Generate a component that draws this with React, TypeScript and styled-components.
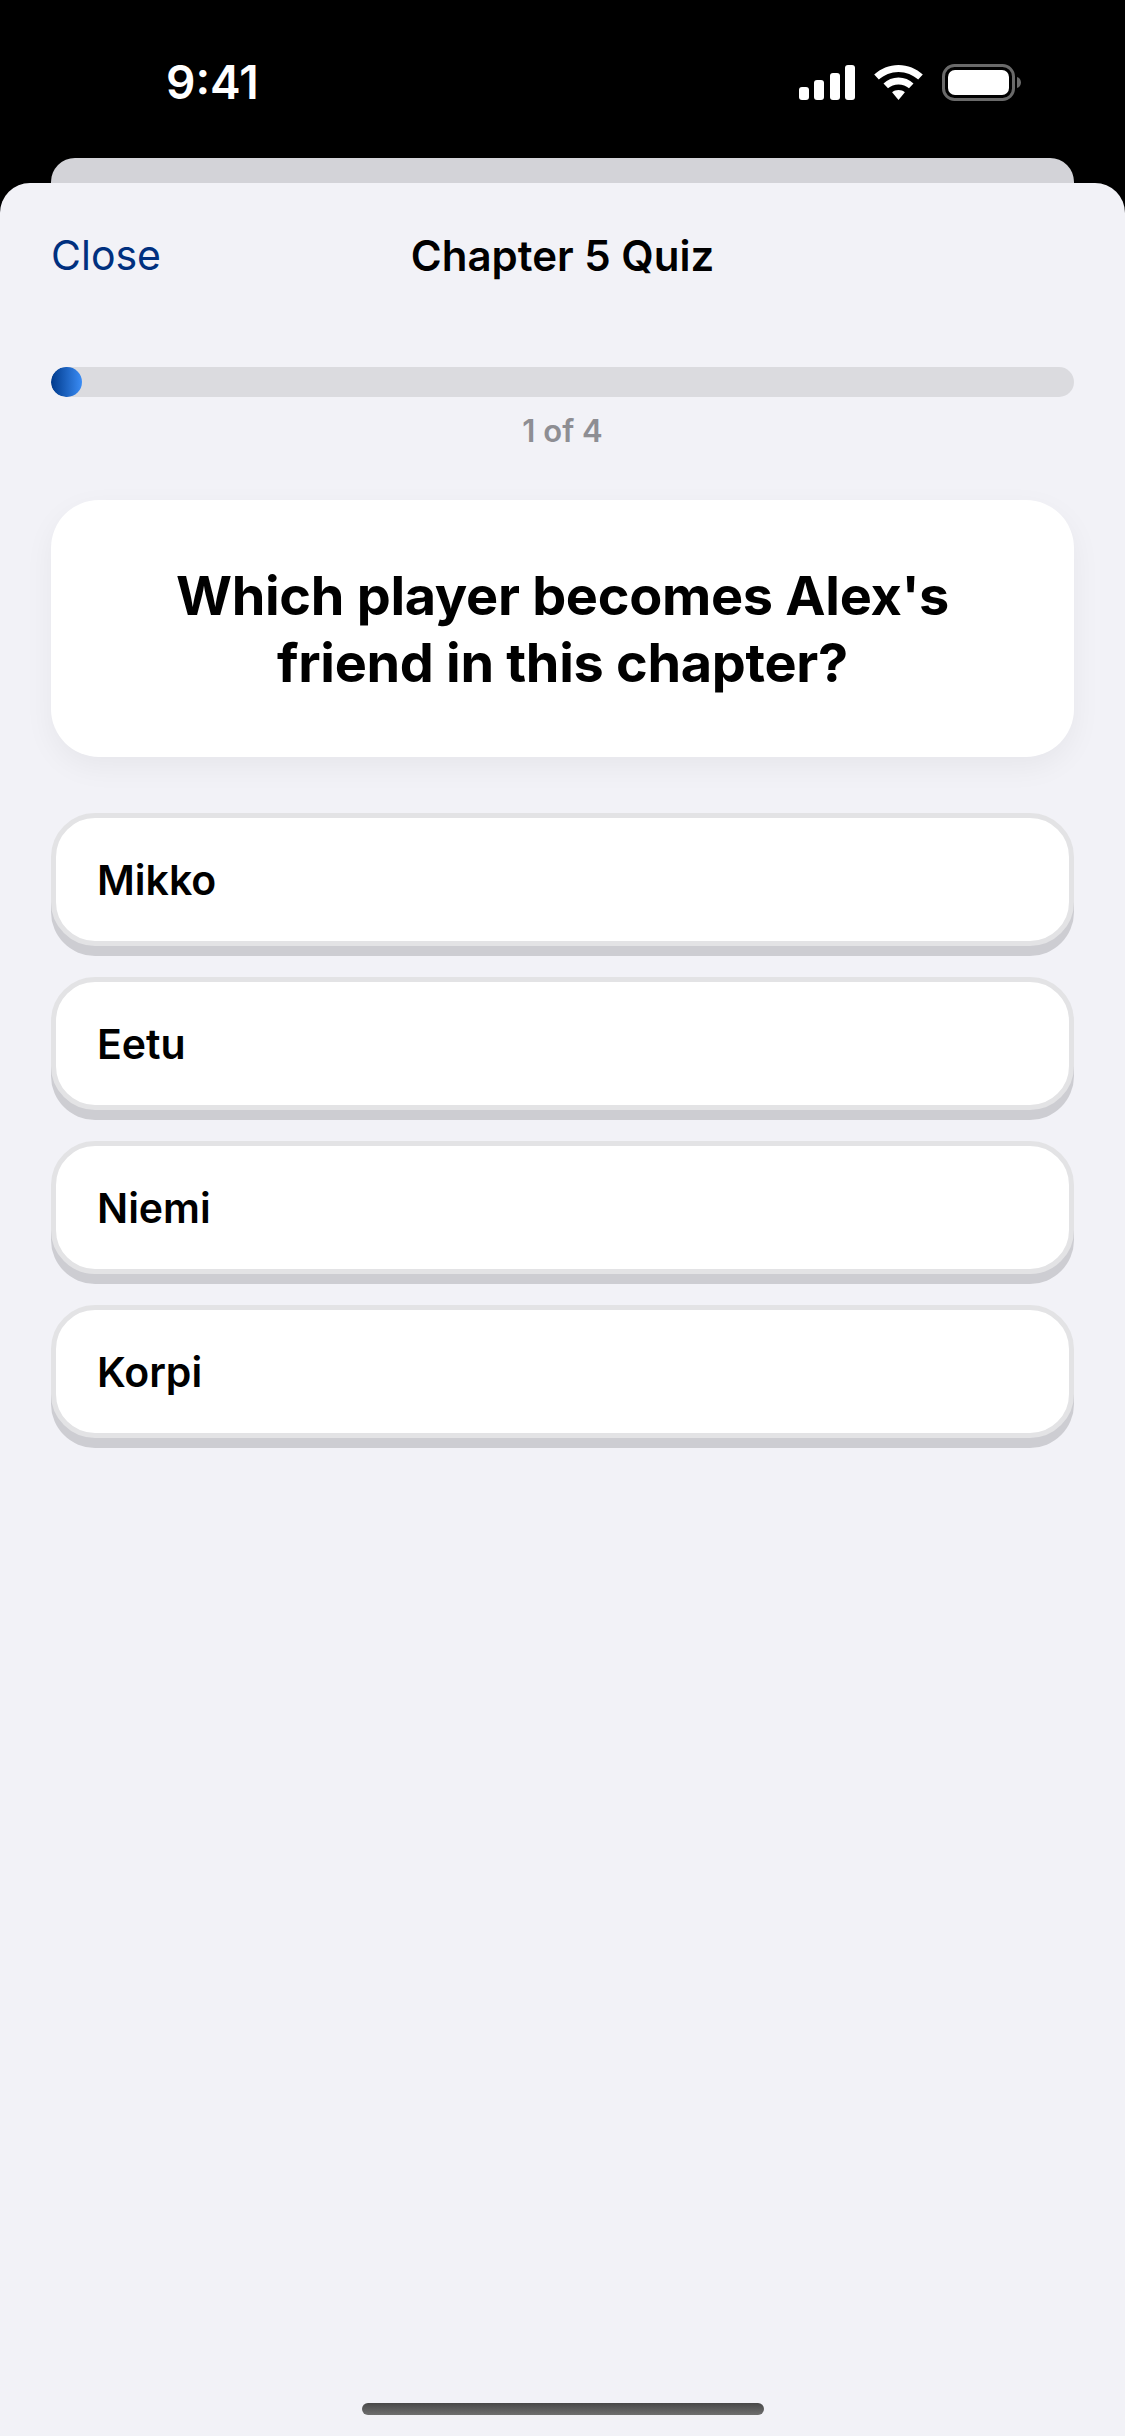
import styled, { createGlobalStyle } from "styled-components";

const GlobalStyle = createGlobalStyle`
	html, body {
		margin: 0;
		padding: 0;
		background: #000;
	}

	* {
		box-sizing: border-box;
	}
`;

const Screen = styled.div`
	display: flex;
	flex-direction: column;
	width: 1125px;
	height: 2436px;
	background: #000;
	font-family: Inter, "Liberation Sans", sans-serif;
	overflow: hidden;
`;

const StatusBar = styled.div`
	display: flex;
	align-items: center;
	justify-content: space-between;
	height: 158px;
	padding: 6px 104px 0 166px;
`;

const Clock = styled.span`
	color: #fff;
	font-size: 46px;
	font-weight: 600;
`;

const StatusIcons = styled.div`
	display: flex;
	align-items: center;
	gap: 19px;
`;

const PeekCard = styled.div`
	flex: none;
	height: 25px;
	margin: 0 51px;
	background: #d3d3d8;
	border-radius: 24px 24px 0 0;
`;

const Sheet = styled.div`
	flex: 1;
	display: flex;
	flex-direction: column;
	padding: 0 51px 21px;
	background: #f2f2f7;
	border-radius: 30px 30px 0 0;
`;

const NavBar = styled.div`
	display: grid;
	grid-template-columns: 1fr auto 1fr;
	align-items: center;
	height: 144px;
`;

const CloseButton = styled.span`
	color: #00307f;
	font-size: 41px;
	font-weight: 400;
`;

const Title = styled.span`
	color: #000;
	font-size: 42px;
	font-weight: 600;
`;

const ProgressTrack = styled.div`
	height: 30px;
	margin-top: 40px;
	background: #dbdbdf;
	border-radius: 15px;
	overflow: hidden;
`;

const ProgressFill = styled.div`
	height: 100%;
	border-radius: 15px;
	background: linear-gradient(90deg, #003a8c, #3a8cf5);
`;

const ProgressLabel = styled.div`
	margin-top: 15px;
	color: #8e8e93;
	font-size: 31px;
	font-weight: 600;
	line-height: 38px;
	text-align: center;
`;

const QuestionCard = styled.div`
	display: flex;
	align-items: center;
	justify-content: center;
	height: 257px;
	margin-top: 50px;
	padding: 0 60px;
	background: #fff;
	border-radius: 48px;
	box-shadow: 0 10px 30px rgba(0, 0, 0, 0.05);
`;

const QuestionText = styled.h1`
	margin: 0;
	color: #000;
	font-size: 54px;
	font-weight: 700;
	line-height: 67px;
	text-align: center;
	letter-spacing: -0.3px;
`;

const Options = styled.div`
	display: flex;
	flex-direction: column;
	gap: 21px;
	margin-top: 56px;
`;

const OptionButton = styled.div`
	display: flex;
	align-items: center;
	height: 133px;
	margin-bottom: 10px;
	padding-left: 41px;
	color: #000;
	background: #fff;
	border: 5px solid #e3e3e5;
	border-radius: 44px;
	box-shadow: 0 10px 0 #cdcdd2;
	font-size: 41px;
	font-weight: 600;
`;

const HomeIndicator = styled.div`
	align-self: center;
	width: 402px;
	height: 12px;
	margin-top: auto;
	background: linear-gradient(180deg, #484848, #6f6f6f);
	border-radius: 6px;
`;

const options = ["Mikko", "Eetu", "Niemi", "Korpi"];

function SignalIcon() {
	return (
		<svg width="56" height="35" viewBox="0 0 56 35" fill="#fff">
			<rect x="0" y="22" width="10" height="13" rx="3" />
			<rect x="15" y="15" width="10" height="20" rx="3" />
			<rect x="31" y="8" width="10" height="27" rx="3" />
			<rect x="46" y="0" width="10" height="35" rx="3" />
		</svg>
	);
}

function WifiIcon() {
	return (
		<svg width="49" height="35" viewBox="0 0 49 35" fill="#fff">
			<path d="M24.5 0C33.8 0 42.3 3.6 48.8 9.6L44.2 14.6C38.9 9.8 32 6.9 24.5 6.9S10.1 9.8 4.8 14.6L0.2 9.6C6.7 3.6 15.2 0 24.5 0Z" />
			<path d="M24.5 12.6C30.3 12.6 35.5 14.8 39.5 18.4L35 23.3C32.2 20.9 28.5 19.4 24.5 19.4S16.8 20.9 14 23.3L9.5 18.4C13.5 14.8 18.7 12.6 24.5 12.6Z" />
			<path d="M24.5 25C27 25 29.2 25.9 30.9 27.3L24.5 35L18.1 27.3C19.8 25.9 22 25 24.5 25Z" />
		</svg>
	);
}

function BatteryIcon() {
	return (
		<svg width="79" height="37" viewBox="0 0 79 37" fill="none">
			<rect x="1.5" y="1.5" width="70" height="34" rx="11" stroke="#6a6a6a" strokeWidth="3" />
			<rect x="6" y="6" width="61" height="25" rx="7" fill="#fff" />
			<path d="M75 13C77.5 13.8 79 16 79 18.5S77.5 23.2 75 24Z" fill="#6a6a6a" />
		</svg>
	);
}

export default function App() {
	return (
		<Screen>
			<GlobalStyle />
			<StatusBar>
				<Clock>9:41</Clock>
				<StatusIcons>
					<SignalIcon />
					<WifiIcon />
					<BatteryIcon />
				</StatusIcons>
			</StatusBar>
			<PeekCard />
			<Sheet>
				<NavBar>
					<CloseButton>Close</CloseButton>
					<Title>Chapter 5 Quiz</Title>
				</NavBar>
				<ProgressTrack>
					<ProgressFill style={{ width: `${(31 / 1023) * 100}%` }} />
				</ProgressTrack>
				<ProgressLabel>1 of 4</ProgressLabel>
				<QuestionCard>
					<QuestionText>
						Which player becomes Alex's
						<br />
						friend in this chapter?
					</QuestionText>
				</QuestionCard>
				<Options>
					{options.map((option) => (
						<OptionButton key={option}>{option}</OptionButton>
					))}
				</Options>
				<HomeIndicator />
			</Sheet>
		</Screen>
	);
}
